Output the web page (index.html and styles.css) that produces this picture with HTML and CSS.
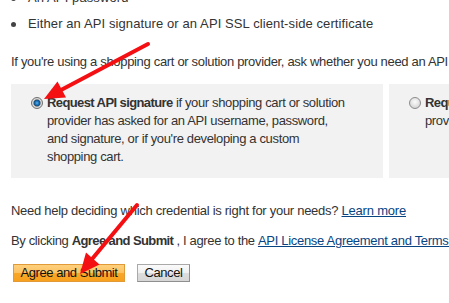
FILE: index.html
```html
<!DOCTYPE html>
<html>
<head>
<meta charset="utf-8">
<link rel="stylesheet" href="styles.css">
</head>
<body>
<div class="page">
  <ul class="reqs">
    <li>An API password</li>
    <li>Either an API signature or an API SSL client-side certificate</li>
  </ul>
  <p class="intro">If you're using a shopping cart or solution provider, ask whether you need an API signature or a certificate.</p>
  <div class="options">
    <label class="option">
      <span class="radio checked"></span>
      <span class="opt-text"><b>Request API signature</b> if your shopping cart or solution provider has asked for an API username, password, and signature, or if you're developing a custom shopping cart.</span>
    </label>
    <label class="option">
      <span class="radio"></span>
      <span class="opt-text"><b>Request API certificate</b> if your shopping cart or solution provider requires an API certificate.</span>
    </label>
  </div>
  <p class="help">Need help deciding which credential is right for your needs? <a href="#">Learn more</a></p>
  <p class="terms">By clicking <b>Agree and Submit</b> , I agree to the <a href="#">API License Agreement and Terms of Use</a>.</p>
  <div class="actions">
    <button class="btn primary">Agree and Submit</button>
    <button class="btn secondary">Cancel</button>
  </div>
</div>
<svg class="arrows" width="449" height="303" viewBox="0 0 449 303">
  <g stroke="#f40f12" stroke-width="4" stroke-linecap="round">
    <line x1="148" y1="44" x2="62" y2="89.5"/>
    <line x1="137" y1="205" x2="92.5" y2="258.5"/>
  </g>
  <g fill="#f40f12">
    <polygon points="44,99 66,97.5 57.5,81.5"/>
    <polygon points="80,274 99.5,264.5 86,252.5"/>
  </g>
</svg>
</body>
</html>
```
FILE: styles.css
```css
html {
  margin: 0;
  padding: 0;
  background: #fff;
  overflow: hidden;
}
body {
  margin: 0;
  padding: 0;
  width: 449px;
  height: 303px;
  overflow: hidden;
  font-family: "Liberation Sans", Arial, sans-serif;
  font-size: 13px;
  color: #333;
}
.page {
  display: flow-root;
  padding-left: 11px;
}
.reqs {
  list-style: none;
  margin: -11px 0 0 0;
  padding: 0;
  display: flex;
  flex-direction: column;
  gap: 8px;
  letter-spacing: 0.1px;
}
.reqs li {
  display: flex;
  align-items: center;
  line-height: 18px;
  white-space: nowrap;
}
.reqs li::before {
  content: "";
  width: 5px;
  height: 5px;
  border-radius: 50%;
  background: #444;
  margin-right: 12px;
  margin-top: 1px;
  flex-shrink: 0;
}
.intro {
  margin: 20px 0 0 0;
  line-height: 18px;
  white-space: nowrap;
  letter-spacing: -0.32px;
}
.options {
  display: flex;
  gap: 6px;
  margin-top: 13px;
}
.option {
  flex-shrink: 0;
  width: 372px;
  box-sizing: border-box;
  background: #f2f2f2;
  padding: 10px 20px 12px 20px;
  display: flex;
  align-items: flex-start;
  line-height: 18px;
}
.opt-text {
  width: 303px;
  letter-spacing: -0.36px;
}
.opt-text b {
  letter-spacing: -0.6px;
}
.radio {
  flex-shrink: 0;
  width: 12px;
  height: 12px;
  box-sizing: border-box;
  border-radius: 50%;
  border: 1px solid #8c8c8c;
  background: radial-gradient(circle at 50% 40%, #fbfbfb 0, #e6e6e6 45%, #c4c4c4 100%);
  margin: 3px 4px 0 0;
}
.radio.checked {
  border-color: #707070;
  background: radial-gradient(circle at 50% 50%, #5cb6ee 0, #1f78c0 1.6px, #15507e 3px, #9a9a9a 3.6px, #dedede 4.2px, #bdbdbd 100%);
}
.help {
  margin: 24px 0 0 0;
  line-height: 18px;
  white-space: nowrap;
  letter-spacing: -0.28px;
}
.help a {
  letter-spacing: -0.2px;
}
.terms {
  margin: 12px 0 0 0;
  line-height: 18px;
  white-space: nowrap;
  letter-spacing: -0.36px;
}
.terms b {
  letter-spacing: -0.6px;
}
.terms a {
  letter-spacing: -0.3px;
}
a {
  color: #084482;
  text-decoration: underline;
}
.actions {
  display: flex;
  gap: 12px;
  margin-top: 14px;
  padding-left: 2px;
}
.btn {
  font-family: "Liberation Sans", Arial, sans-serif;
  font-size: 13px;
  letter-spacing: -0.45px;
  white-space: nowrap;
  height: 18px;
  line-height: 16px;
  padding: 0;
  margin: 0;
  color: #111;
  box-sizing: border-box;
  border-radius: 0;
  text-align: center;
}
.primary {
  width: 112px;
  border: 1px solid #e09a37;
  background: linear-gradient(#fed07c 0, #fcc261 50%, #f9a72a 50%, #f7a01c 100%);
}
.secondary {
  width: 53px;
  border: 1px solid #a9a9a9;
  border-right-color: #8f8f8f;
  border-bottom-color: #8f8f8f;
  background: linear-gradient(#fafafa 0, #f0f0f0 50%, #dddddd 50%, #d6d6d6 100%);
}
.arrows {
  position: absolute;
  left: 0;
  top: 0;
  pointer-events: none;
}
```
